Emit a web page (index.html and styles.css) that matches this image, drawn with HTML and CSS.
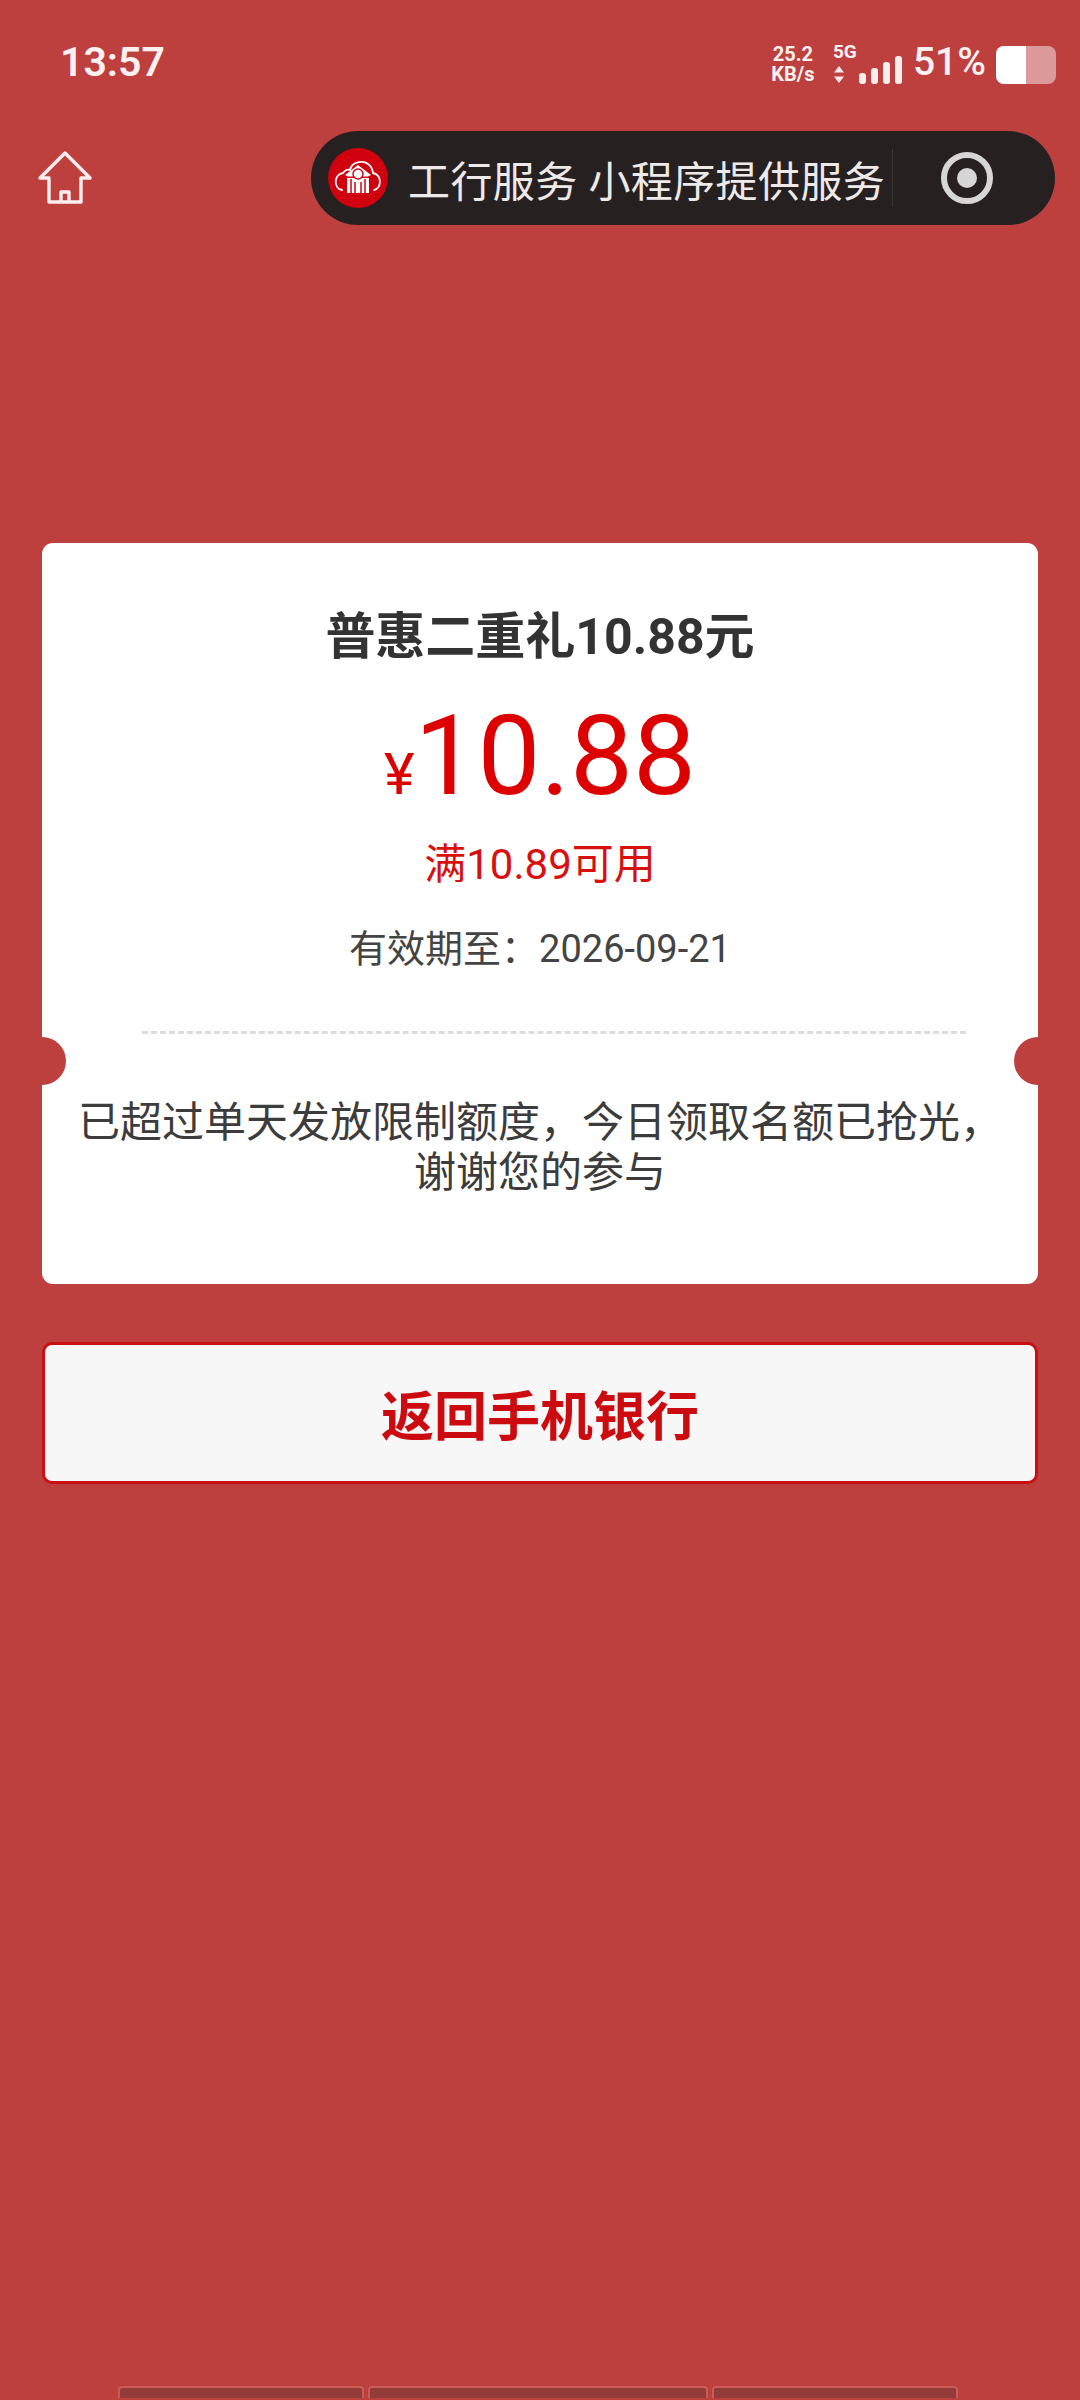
FILE: index.html
```html
<!DOCTYPE html>
<html lang="zh-CN">
<head>
<meta charset="utf-8">
<title>普惠二重礼</title>
<link rel="stylesheet" href="styles.css">
</head>
<body>
<div class="page">
  <header class="status">
    <span class="time">13:57</span>
    <div class="status-right">
      <div class="speed"><span>25.2</span><span>KB/s</span></div>
      <div class="net">
        <span class="net-label">5G</span>
        <svg class="arrows" width="12" height="17" viewBox="0 0 12 17"><path d="M6 0l5 6.5H1zM6 17l-5-6.5h10z" fill="#fbe9e9"/></svg>
      </div>
      <svg class="signal" width="44" height="28" viewBox="0 0 44 28"><g fill="#fbeeee"><rect x="0" y="17" width="7" height="11" rx="3"/><rect x="12" y="12" width="7" height="16" rx="3"/><rect x="24" y="6" width="7" height="22" rx="3"/><rect x="36" y="0" width="7" height="28" rx="3"/></g></svg>
      <span class="pct">51%</span>
      <div class="battery"><div class="battery-level"></div></div>
    </div>
  </header>

  <nav class="nav">
    <svg class="home" width="54" height="54" viewBox="0 0 54 54"><path d="M27 2 L52 27 H43 V51 H11 V27 H2 Z M23 51 V41 H31 V51" fill="none" stroke="#fdeeee" stroke-width="3.4" stroke-linejoin="round"/></svg>
    <div class="capsule">
      <svg class="logo" width="60" height="60" viewBox="0 0 60 60">
        <circle cx="30" cy="30" r="30" fill="#d0000f"/>
        <path d="M14 42 C5 40 6 26 15 25 C17 22 20 21 22 22 C24 13 37 11 43 19 C44 21 45 23 45 25 C54 27 54 40 46 42" fill="none" stroke="#fff" stroke-width="1.8" stroke-linecap="round"/>
        <path d="M17 27 L30 17 L43 27 L40 28.500 H20 Z" fill="#fff"/>
        <rect x="19" y="30" width="22" height="15" fill="#fff"/>
        <circle cx="30" cy="26" r="5" fill="#fff" stroke="#d0000f" stroke-width="1.400"/>
        <path d="M23 31v14M27 34v11M33 34v11M37 31v14" stroke="#d0000f" stroke-width="1.500"/>
      </svg>
      <span class="capsule-title">工行服务 小程序提供服务</span>
      <span class="capsule-divider"></span>
      <span class="ring"><span class="ring-dot"></span></span>
    </div>
  </nav>

  <main class="main">
    <section class="card">
      <span class="notch notch-left"></span>
      <span class="notch notch-right"></span>
      <h1 class="title">普惠二重礼10.88元</h1>
      <div class="price"><span class="yen">¥</span><span class="amount">10.88</span></div>
      <div class="condition">满10.89可用</div>
      <div class="expiry">有效期至：2026-09-21</div>
      <div class="dash"></div>
      <p class="message">已超过单天发放限制额度，今日领取名额已抢光，<br>谢谢您的参与</p>
    </section>
    <button class="back">返回手机银行</button>
  </main>

  <div class="gesture">
    <span class="seg seg-a"></span>
    <span class="seg seg-b"></span>
    <span class="seg seg-c"></span>
  </div>
</div>
</body>
</html>
```

FILE: styles.css
```css
* { box-sizing: border-box; }
html, body { margin: 0; padding: 0; }
body {
  background: #bd403f;
  font-family: Roboto, "Noto Sans CJK SC", sans-serif;
}
.page {
  width: 1080px;
  height: 2400px;
  display: flex;
  flex-direction: column;
  overflow: hidden;
}
.status {
  height: 124px;
  padding: 38px 24px 0 60px;
  display: flex;
  justify-content: space-between;
  align-items: flex-start;
  color: #fdf1f1;
}
.time {
  font-size: 41px;
  font-weight: 600;
  line-height: 48px;
}
.status-right {
  display: flex;
  align-items: flex-end;
  height: 40px;
  margin-top: 6px;
  padding-right: 0;
}
.speed {
  display: flex;
  flex-direction: column;
  align-items: center;
  font-size: 20px;
  font-weight: 700;
  line-height: 20px;
  width: 46px;
}
.net {
  margin-left: 17px;
  display: flex;
  flex-direction: column;
  width: 26px;
  font-size: 19px;
  font-weight: 700;
  line-height: 20px;
}
.net-label { margin-bottom: 4px; }
.arrows { display: block; margin-bottom: 1px; }
.signal { margin-left: 0; margin-bottom: 0; }
.pct {
  margin-left: 10px;
  font-size: 39px;
  font-weight: 500;
  line-height: 44px;
}
.battery {
  margin-left: 10px;
  width: 60px;
  height: 38px;
  background: #dd9a9a;
  border-radius: 8px;
  overflow: hidden;
  margin-bottom: 0;
}
.battery-level { width: 30px; height: 100%; background: #fff; }
.nav {
  height: 108px;
  padding: 7px 25px 0 38px;
  display: flex;
  justify-content: space-between;
  align-items: flex-start;
}
.home { margin-top: 20px; }
.capsule {
  width: 744px;
  height: 94px;
  border-radius: 47px;
  background: #272021;
  display: flex;
  align-items: center;
  padding-left: 17px;
}
.logo { flex: none; }
.capsule-title {
  margin-left: 20px;
  width: 482px;
  font-size: 42px;
  color: #eeeaea;
  white-space: nowrap;
  letter-spacing: .4px;
}
.capsule-divider {
  width: 1px;
  height: 58px;
  background: #3d3637;
  margin-left: 2px;
}
.ring {
  margin-left: 48px;
  width: 52px;
  height: 52px;
  border: 6px solid #d6d6d6;
  border-radius: 50%;
  display: flex;
  align-items: center;
  justify-content: center;
}
.ring-dot { width: 20px; height: 20px; border-radius: 50%; background: #d6d6d6; }
.main {
  padding: 311px 42px 0 42px;
  flex: 1;
}
.card {
  position: relative;
  height: 741px;
  background: #fff;
  border-radius: 11px;
  overflow: hidden;
  text-align: center;
}
.notch {
  position: absolute;
  top: 494px;
  width: 48px;
  height: 48px;
  border-radius: 50%;
  background: #bd403f;
}
.notch-left { left: -24px; }
.notch-right { right: -24px; }
.title {
  margin: 0;
  padding-top: 62px;
  font-size: 50px;
  line-height: 64px;
  font-weight: 700;
  color: #333;
}
.price {
  margin-top: 26px;
  height: 122px;
  display: flex;
  justify-content: center;
  align-items: baseline;
  color: #dd0000;
  line-height: 122px;
}
.yen { font-size: 58px; }
.amount { font-size: 112px; }
.condition {
  margin-top: 22px;
  font-size: 42px;
  line-height: 52px;
  color: #d81010;
}
.expiry {
  margin-top: 32px;
  font-size: 38px;
  line-height: 52px;
  color: #444;
}
.dash {
  margin: 56px 72px 0 100px;
  height: 0;
  border-top: 3px dashed #ddd;
}
.message {
  margin: 64px 0 0;
  font-size: 42px;
  line-height: 50px;
  color: #3c3c3c;
}
.back {
  display: block;
  width: 100%;
  height: 142px;
  margin-top: 58px;
  background: #f7f7f7;
  border: 3px solid #c90f14;
  border-radius: 10px;
  color: #cc0b10;
  font-family: inherit;
  font-size: 53px;
  font-weight: 700;
}
.gesture {
  height: 14px;
  margin: 0 0 0 118px;
  display: flex;
  gap: 4px;
}
.seg {
  height: 12px;
  background: #913c39;
  border: 2px solid #cc5a59;
  border-bottom: 0;
  border-radius: 4px 4px 0 0;
}
.seg-a { width: 246px; }
.seg-b { width: 340px; }
.seg-c { width: 246px; }
```
